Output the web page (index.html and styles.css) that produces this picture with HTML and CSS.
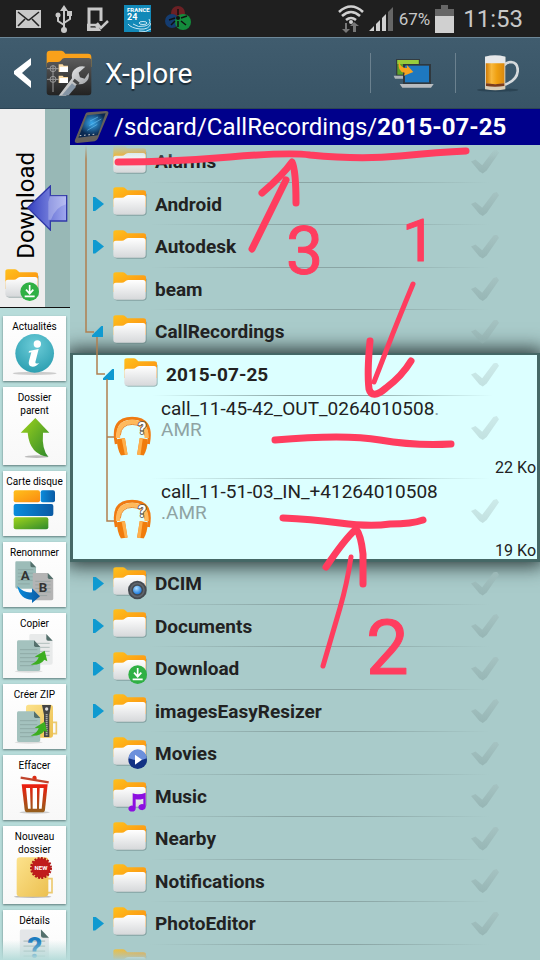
FILE: index.html
```
<!DOCTYPE html>
<html lang="fr">

<head>
    <meta charset="UTF-8">
    <meta name="viewport" content="width=device-width, initial-scale=1.0">
    <title>X-plore</title>
    <link rel="stylesheet" href="styles.css">
</head>

<body>
    <!-- Shared shapes -->
    <svg class="defs" width="0" height="0" aria-hidden="true">
        <defs>
            <linearGradient id="gOrange" x1="0" y1="0" x2="1" y2="1">
                <stop offset="0" stop-color="#ffc01c" />
                <stop offset="1" stop-color="#fb8a10" />
            </linearGradient>
            <linearGradient id="gWhite" x1="0" y1="0" x2="0" y2="1">
                <stop offset="0" stop-color="#fff" />
                <stop offset="1" stop-color="#d6d8da" />
            </linearGradient>
            <linearGradient id="gGreen" x1="0" y1="0" x2="1" y2="1">
                <stop offset="0" stop-color="#a0d41c" />
                <stop offset="1" stop-color="#2f8a2c" />
            </linearGradient>
            <linearGradient id="gBlue" x1="0" y1="0" x2="1" y2="0">
                <stop offset="0" stop-color="#0a8cdc" />
                <stop offset="1" stop-color="#0a5aa4" />
            </linearGradient>
            <linearGradient id="gRed" x1="0" y1="0" x2="0" y2="1">
                <stop offset="0" stop-color="#ee1c10" />
                <stop offset="1" stop-color="#94601c" />
            </linearGradient>
            <linearGradient id="gYellow" x1="0" y1="0" x2="1" y2="1">
                <stop offset="0" stop-color="#fce28c" />
                <stop offset="1" stop-color="#ecc050" />
            </linearGradient>
            <linearGradient id="gMetal" x1="0" y1="0" x2="1" y2="1">
                <stop offset="0" stop-color="#fff" />
                <stop offset="1" stop-color="#8a8e92" />
            </linearGradient>
            <linearGradient id="gBeer" x1="0" y1="0" x2="1" y2="0">
                <stop offset="0" stop-color="#d07c08" />
                <stop offset=".3" stop-color="#f8b83c" />
                <stop offset=".6" stop-color="#f0a010" />
                <stop offset="1" stop-color="#d88810" />
            </linearGradient>
            <linearGradient id="gDark" x1="0" y1="0" x2="0" y2="1">
                <stop offset="0" stop-color="#5c5c5c" />
                <stop offset="1" stop-color="#222" />
            </linearGradient>
            <linearGradient id="gArrow" x1="0" y1="0" x2="1" y2="0">
                <stop offset="0" stop-color="#3440c0" />
                <stop offset="1" stop-color="#a0a8ee" />
            </linearGradient>
            <radialGradient id="gInfo" cx=".5" cy=".3" r=".7">
                <stop offset="0" stop-color="#6cccd8" />
                <stop offset="1" stop-color="#2ea0b2" />
            </radialGradient>
            <radialGradient id="gLens" cx=".4" cy=".3" r=".7">
                <stop offset="0" stop-color="#b0e0ff" />
                <stop offset="1" stop-color="#1878dc" />
            </radialGradient>
            <radialGradient id="gScreen" cx=".5" cy=".4" r=".5">
                <stop offset="0" stop-color="#38a8ec" />
                <stop offset="1" stop-color="#0a2850" />
            </radialGradient>
        </defs>

        <symbol id="folder" viewBox="0 0 108 102">
            <path d="M3 14v62q0 10 10 10h78q10 0 10-10V20z" fill="#64807f" opacity=".55" />
            <path d="M1 60V8q0-7 8-7h21q5 0 9 5l4 4h48q8 0 8 7v43z" fill="url(#gOrange)" />
            <path d="M1 74V40q0-8 8-8h18q5 0 8-3l4-3q3-2 7-2h44q8 0 8 8v42q0 9-9 9H10q-9 0-9-9z" fill="url(#gWhite)" />
        </symbol>
        <symbol id="badge-download" viewBox="0 0 108 102">
            <circle cx="74" cy="68" r="28" fill="#2fb044" />
            <path d="M74 48v24M63 62l11 12 11-12M59 82h30" fill="none" stroke="#fff" stroke-width="5" />
        </symbol>
        <symbol id="badge-camera" viewBox="0 0 108 102">
            <circle cx="73" cy="69" r="28" fill="#444a50" />
            <circle cx="73" cy="69" r="20" fill="none" stroke="#5f656c" stroke-width="5" />
            <circle cx="73" cy="69" r="13" fill="url(#gLens)" />
        </symbol>
        <symbol id="badge-play" viewBox="0 0 108 102">
            <circle cx="74" cy="68" r="28" fill="#123284" />
            <path d="M47 64a27 27 0 0 1 54 0q-24 12-54 0z" fill="#6c90dc" />
            <path d="M66 53v30l21-15z" fill="#fff" />
        </symbol>
        <symbol id="badge-music" viewBox="0 0 108 102">
            <path d="M59 43q18 6 39-2v43a11 9 0 1 1-7-8V59q-12 4-23 2v27a11 9 0 1 1-9-8z" fill="#8c0fe0" />
        </symbol>
        <symbol id="headphones" viewBox="0 0 118 120">
            <path d="M10 84Q-6 6 58 6t49 78" fill="none" stroke="#ef7a12" stroke-width="9" />
            <path d="M15 66Q15 17 58 17t44 49" fill="none" stroke="#ffb95c" stroke-width="13" />
            <path d="M22 58Q25 25 58 25t37 33" fill="none" stroke="#ef8a28" stroke-width="3" />
            <path d="M12 70l24-4 8 50-20 3q-12-20-12-49z" fill="#f07c0c" />
            <path d="M26 68l10-2 8 50-8 1z" fill="#ffb04c" />
            <path d="M105 70l-24-4-8 50 20 3q12-20 12-49z" fill="#f07c0c" />
            <path d="M81 66l9 2-7 50-10-2z" fill="#ffb04c" />
        </symbol>
        <symbol id="page" viewBox="0 0 72 96">
            <path d="M5 2h47l19 20v66q0 6-6 6H6q-5 0-5-6V7q0-5 4-5z" />
            <path d="M52 2l19 20H57q-5 0-5-5z" fill="#54706c" />
            <path d="M10 30h52M10 42h52M10 54h52M10 66h52M10 78h40" stroke="#7c9490" stroke-width="3" opacity=".5" />
        </symbol>
    </svg>

    <div class="status-bar">
        <div class="status-group">
            <svg width="25" height="18" viewBox="0 0 25 18">
                <path d="M0 0h25v18H0z" fill="#c8c8c8" />
                <path d="M2 2l10 8h1l10-8M2 16l7-7M23 16l-7-7" fill="none" stroke="#222" stroke-width="1.6" />
            </svg>
            <svg width="18" height="28" viewBox="0 0 18 28">
                <path d="M9 4v20M9 20l-6-4v-6M9 18l6-4V9" fill="none" stroke="#c8c8c8" stroke-width="2" />
                <path d="M9 0l4 6H5zM12 6h5v5h-5z" fill="#c8c8c8" />
                <circle cx="3" cy="10" r="2.5" fill="#c8c8c8" />
                <circle cx="9" cy="25" r="3" fill="#c8c8c8" />
            </svg>
            <svg width="23" height="24" viewBox="0 0 23 24">
                <path d="M14 14V2H2v20h9" fill="none" stroke="#c8c8c8" stroke-width="3" />
                <path d="M1 18h8l3 5H1zM10 16l4 5 7-7" fill="none" stroke="#c8c8c8" stroke-width="2.5" />
            </svg>
            <svg width="27" height="27" viewBox="0 0 27 27">
                <path d="M0 0h27v27H0z" fill="#1289b8" />
                <text x="3" y="7" class="logo-small">FRANCE</text>
                <text x="3" y="15" class="logo-big">24</text>
                <g fill="none" stroke="#c6e6f2">
                    <ellipse cx="19" cy="18" rx="4" ry="1.5" />
                    <path d="M25 14q3 5-4 7t-12-2M27 18q-2 7-11 6t-12-5M27 24q-5 4-12 2" />
                </g>
            </svg>
            <svg width="26" height="26" viewBox="0 0 26 26">
                <circle cx="13" cy="7" r="7" fill="#6c2024" />
                <circle cx="7" cy="15" r="7" fill="#143c70" />
                <circle cx="18" cy="16" r="8" fill="#148c3c" />
                <circle cx="13" cy="12" r="2" fill="#111" />
                <path d="M13 3v6M4 14l6-2M16 12l6-2M13 15v6M16 15l5 4M10 15l-4 4" stroke="#111" stroke-width="1.5" />
            </svg>
        </div>
        <div class="status-group status-right">
            <svg width="26" height="28" viewBox="0 0 26 28">
                <g fill="none" stroke="#d0d0d0" stroke-width="2.6">
                    <path d="M1 7q12-11 24 0M4 11q9-8 18 0M8 15q5-4 10 0" />
                </g>
                <circle cx="13" cy="17" r="2" fill="#d0d0d0" />
                <path d="M9 18v6h3l-4 4-4-4h3v-6zM15 27v-6h-3l4-4 5 4h-3v6z" fill="#777" />
            </svg>
            <svg width="25" height="24" viewBox="0 0 25 24">
                <path d="M0 24l5-5v5zM7 17l4-4v11H7zM13 11l4-4v17h-4z" fill="#d0d0d0" />
                <path d="M19 5l5-5v24h-5z" fill="#666" />
            </svg>
            <span class="battery-level">67%</span>
            <svg width="19" height="28" viewBox="0 0 19 28">
                <path d="M6 0h7v4h6v8H0V4h6z" fill="#666" />
                <path d="M0 11h19v17H0z" fill="#d0d0d0" />
            </svg>
            <span class="clock">11:53</span>
        </div>
    </div>

    <header class="app-bar">
        <button class="back-button" aria-label="Retour">
            <svg width="17" height="30" viewBox="0 0 17 30">
                <path d="M17 0v7L8 15l9 8v7L0 16v-3z" fill="#fff" />
            </svg>
            <svg width="46" height="46" viewBox="0 0 138 138">
                <path d="M2 12q0-10 10-10h34q7 0 12 9h68q10 0 10 10v30H2z" fill="#f9a11a" />
                <path d="M2 44q0-8 8-8h26q6 0 10-6 3-6 10-6h72q8 0 8 8v94q0 10-10 10H12q-10 0-10-10z" fill="url(#gDark)" />
                <g fill="none" stroke="#9a9a9a" stroke-width="3">
                    <circle cx="21" cy="56" r="9" />
                    <circle cx="21" cy="88" r="9" />
                    <path d="M3 56h35M3 88h35M21 46v52M21 98v28" />
                </g>
                <path d="M38 43h12l3 4h13v19H38zM38 77h12l3 4h13v18H38z" fill="#fbd9a0" />
                <path d="M41 50h25v16H41zM41 84h25v15H41z" fill="#fff" />
                <path d="M38 137l40-52q-4-22 14-32 14-7 26-3L98 68l4 14 14 4 12-18q4 20-12 31-10 6-22 3l-34 35z" fill="url(#gMetal)" />
                <path d="M48 136l30-36 12 10-22 26z" fill="#8494a4" />
                <path d="M86 86l15 12-6 8-15-12z" fill="#444" />
            </svg>
        </button>
        <h1>X-plore</h1>
        <button class="bar-button" aria-label="Transfert">
            <svg width="41" height="30" viewBox="0 0 123 90">
                <path d="M9 3h72v50H9z" fill="#333c40" />
                <path d="M13 6h64v44H13z" fill="#5ea028" />
                <path d="M13 6h64v12H13z" fill="#98cc3c" />
                <path d="M2 53h30v9H6z" fill="#aeb4b8" />
                <path d="M30 18h84v60H30z" fill="#30383e" />
                <path d="M36 23h72v50H36z" fill="#1e78c0" />
                <path d="M20 78h102l-8 11H28z" fill="#b8bcc0" />
                <path d="M18 10q4 22 24 20l-1-10 20 22-28 11 2-9Q12 42 18 10z" fill="#f8a420" />
            </svg>
        </button>
        <button class="bar-button" aria-label="Bière">
            <svg width="42" height="38" viewBox="0 0 126 114">
                <ellipse cx="62" cy="108" rx="62" ry="5" fill="#1c3240" opacity=".5" />
                <path d="M82 34q6-10 20-10 22 2 20 28t-38 40" fill="none" stroke="#d6dadd" stroke-width="8" />
                <path d="M24 8h61v98q-30 6-61 0z" fill="#d8cdb8" />
                <path d="M27 26h55v62q-28 6-55 0z" fill="url(#gBeer)" />
                <path d="M27 88q28 5 55 0v8q-28 5-55 0z" fill="#7c3c1c" />
                <path d="M24 8q30-8 61 0v20H24z" fill="#e6e8ea" />
            </svg>
        </button>
    </header>

    <div class="content">
        <nav class="sidebar">
            <a class="pane-tab" href="#download">
                <span>Download</span>
                <svg width="36" height="34"><use href="#folder" /><use href="#badge-download" /></svg>
                <svg class="pane-arrow" width="41" height="46" viewBox="0 0 123 138">
                    <path d="M2 68L70 3v29h49v76H70v27z" fill="url(#gArrow)" stroke="#3038a8" stroke-width="4" />
                    <path d="M70 32h47v26Q86 66 72 104H64V50z" fill="#fff" opacity=".25" />
                </svg>
            </a>
            <div class="actions">
                <button class="action">
                    <span>Actualités</span>
                    <svg class="action-icon" viewBox="0 0 150 132">
                        <ellipse cx="74" cy="121" rx="66" ry="5" fill="#ccc" />
                        <circle cx="74" cy="61" r="58" fill="url(#gInfo)" />
                        <circle cx="82" cy="33" r="11" fill="#fff" />
                        <path d="M57 54l29-6-10 40q0 6 12 2-12 14-26 10-8-4-5-16l7-26-8 1z" fill="#fff" />
                    </svg>
                </button>
                <button class="action">
                    <span>Dossier parent</span>
                    <svg class="action-icon" viewBox="0 0 150 132">
                        <ellipse cx="80" cy="119" rx="36" ry="4" fill="#bbb" />
                        <path d="M76 3l42 44H99q-4 50 16 72-56-6-62-72H32z" fill="url(#gGreen)" />
                    </svg>
                </button>
                <button class="action">
                    <span>Carte disque</span>
                    <svg class="action-icon" viewBox="0 0 150 132">
                        <rect x="11" y="7" width="79" height="36" rx="6" fill="url(#gOrange)" />
                        <rect x="92" y="7" width="43" height="36" rx="6" fill="url(#gBlue)" />
                        <rect x="11" y="48" width="119" height="36" rx="6" fill="url(#gBlue)" />
                        <rect x="11" y="88" width="104" height="36" rx="6" fill="url(#gGreen)" />
                    </svg>
                </button>
                <button class="action">
                    <span>Renommer</span>
                    <svg class="action-icon" viewBox="0 0 150 132">
                        <use href="#page" x="15" y="5" width="64" height="86" fill="#9cbcb8" />
                        <use href="#page" x="67" y="40" width="64" height="86" fill="#b4b4b4" />
                        <text x="46" y="64" class="letter">A</text>
                        <text x="99" y="98" class="letter">B</text>
                        <path d="M22 81q20 22 44 19V88l24 24-24 20v-10q-36 0-44-41z" fill="url(#gBlue)" />
                    </svg>
                </button>
                <button class="action">
                    <span>Copier</span>
                    <svg class="action-icon" viewBox="0 0 150 132">
                        <ellipse cx="56" cy="124" rx="42" ry="4" fill="#ddd" />
                        <use href="#page" x="57" y="10" width="72" height="96" fill="#e8eaea" />
                        <use href="#page" x="20" y="29" width="72" height="96" fill="#a4c2be" />
                        <path d="M62 104q20-8 24-22l-12-2 30-18 8 32-9-5q-12 18-41 15z" fill="#3cae20" />
                    </svg>
                </button>
                <button class="action">
                    <span>Créer ZIP</span>
                    <svg class="action-icon" viewBox="0 0 150 132">
                        <ellipse cx="56" cy="124" rx="42" ry="4" fill="#ddd" />
                        <path d="M124 64h15v34h-15" fill="none" stroke="#ecca70" stroke-width="5" />
                        <rect x="48" y="11" width="81" height="99" rx="8" fill="url(#gYellow)" />
                        <path d="M96 12h27l-5 30v66h-16V42z" fill="#444" />
                        <path d="M110 40v66" stroke="#ccc" stroke-width="6" stroke-dasharray="3 3" />
                        <circle cx="110" cy="24" r="5" fill="#ddd" />
                        <use href="#page" x="20" y="29" width="72" height="96" fill="#a4c2be" />
                        <path d="M62 104q20-8 24-22l-12-2 30-18 8 32-9-5q-12 18-41 15z" fill="#3cae20" />
                    </svg>
                </button>
                <button class="action">
                    <span>Effacer</span>
                    <svg class="action-icon" viewBox="0 0 150 132">
                        <ellipse cx="74" cy="121" rx="46" ry="4" fill="#ccc" />
                        <path d="M32 17l84 14" stroke="#c0442c" stroke-width="7" />
                        <path d="M67 20q0-10 7-9t6 11z" fill="#dc2c14" />
                        <path d="M35 37h78l-8 76q-1 8-9 8H53q-8 0-9-8z" fill="url(#gRed)" />
                        <path d="M48 48h12l2 62h-8zM68 48h13v62H68zM89 48h12l-6 62h-8z" fill="#fff" />
                    </svg>
                </button>
                <button class="action">
                    <span>Nouveau dossier</span>
                    <svg class="action-icon" viewBox="0 0 150 132">
                        <ellipse cx="68" cy="122" rx="56" ry="4" fill="#bbb" />
                        <path d="M112 68h14v42h-14" fill="none" stroke="#ecca70" stroke-width="5" />
                        <rect x="20" y="4" width="95" height="118" rx="10" fill="url(#gYellow)" />
                        <circle cx="93" cy="36" r="29" fill="#c01c1c" />
                        <circle cx="93" cy="36" r="30" fill="none" stroke="#b01818" stroke-width="6" stroke-dasharray="6 4" />
                        <text x="93" y="42" class="new-text">NEW</text>
                    </svg>
                </button>
                <button class="action">
                    <span>Détails</span>
                    <svg class="action-icon" viewBox="0 0 150 132">
                        <use href="#page" x="28" y="5" width="90" height="120" fill="#e4e6e8" />
                        <text x="74" y="92" class="question">?</text>
                    </svg>
                </button>
            </div>
        </nav>

        <main class="browser">
            <div class="path-bar">
                <svg width="35" height="32" viewBox="0 0 105 96">
                    <path d="M34 10q2-6 8-6l54-4q9 0 7 8L72 82q-3 8-10 9l-52 5q-10 0-7-9z" fill="#64605c" />
                    <path d="M39 13l56-6-24 66-58 7z" fill="url(#gScreen)" />
                    <path d="M48 30l24-12M46 44l36-20M40 58l30-18" stroke="#6cc4f4" stroke-width="3" opacity=".6" />
                    <path d="M17 74l52-5" stroke="#ccc" stroke-width="3" stroke-dasharray="5 8" />
                </svg>
                <p>/sdcard/CallRecordings/<b>2015-07-25</b></p>
            </div>

            <div class="tree">
                <ul>
                    <li class="row">
                        <span class="twisty"></span>
                        <svg class="icon"><use href="#folder" /></svg>
                        <span class="name">Alarms</span>
                        <input type="checkbox" class="tick" aria-label="Alarms">
                    </li>
                    <li class="row">
                        <span class="twisty closed"></span>
                        <svg class="icon"><use href="#folder" /></svg>
                        <span class="name">Android</span>
                        <input type="checkbox" class="tick" aria-label="Android">
                    </li>
                    <li class="row">
                        <span class="twisty closed"></span>
                        <svg class="icon"><use href="#folder" /></svg>
                        <span class="name">Autodesk</span>
                        <input type="checkbox" class="tick" aria-label="Autodesk">
                    </li>
                    <li class="row">
                        <span class="twisty"></span>
                        <svg class="icon"><use href="#folder" /></svg>
                        <span class="name">beam</span>
                        <input type="checkbox" class="tick" aria-label="beam">
                    </li>
                    <li class="row last">
                        <span class="twisty open"></span>
                        <svg class="icon"><use href="#folder" /></svg>
                        <span class="name">CallRecordings</span>
                        <input type="checkbox" class="tick" aria-label="CallRecordings">
                    </li>
                </ul>

                <section class="current">
                    <div class="row nested">
                        <span class="twisty open"></span>
                        <svg class="icon"><use href="#folder" /></svg>
                        <span class="name">2015-07-25</span>
                        <input type="checkbox" class="tick" aria-label="2015-07-25">
                    </div>
                    <div class="file">
                        <svg class="file-icon" viewBox="0 0 118 120">
                            <use href="#headphones" />
                            <text x="76" y="54" class="mark">?</text>
                        </svg>
                        <p class="file-name">call_11-45-42_OUT_0264010508<span>.<br>AMR</span></p>
                        <input type="checkbox" class="tick" aria-label="call_11-45-42_OUT_0264010508.AMR">
                        <span class="size">22 Ko</span>
                    </div>
                    <div class="file">
                        <svg class="file-icon" viewBox="0 0 118 120">
                            <use href="#headphones" />
                            <text x="76" y="54" class="mark">?</text>
                        </svg>
                        <p class="file-name">call_11-51-03_IN_+41264010508<span><br>.AMR</span></p>
                        <input type="checkbox" class="tick" aria-label="call_11-51-03_IN_+41264010508.AMR">
                        <span class="size">19 Ko</span>
                    </div>
                </section>

                <ul>
                    <li class="row">
                        <span class="twisty closed"></span>
                        <svg class="icon"><use href="#folder" /><use href="#badge-camera" /></svg>
                        <span class="name">DCIM</span>
                        <input type="checkbox" class="tick" aria-label="DCIM">
                    </li>
                    <li class="row">
                        <span class="twisty closed"></span>
                        <svg class="icon"><use href="#folder" /></svg>
                        <span class="name">Documents</span>
                        <input type="checkbox" class="tick" aria-label="Documents">
                    </li>
                    <li class="row">
                        <span class="twisty closed"></span>
                        <svg class="icon"><use href="#folder" /><use href="#badge-download" /></svg>
                        <span class="name">Download</span>
                        <input type="checkbox" class="tick" aria-label="Download">
                    </li>
                    <li class="row">
                        <span class="twisty closed"></span>
                        <svg class="icon"><use href="#folder" /></svg>
                        <span class="name">imagesEasyResizer</span>
                        <input type="checkbox" class="tick" aria-label="imagesEasyResizer">
                    </li>
                    <li class="row">
                        <span class="twisty"></span>
                        <svg class="icon"><use href="#folder" /><use href="#badge-play" /></svg>
                        <span class="name">Movies</span>
                        <input type="checkbox" class="tick" aria-label="Movies">
                    </li>
                    <li class="row">
                        <span class="twisty"></span>
                        <svg class="icon"><use href="#folder" /><use href="#badge-music" /></svg>
                        <span class="name">Music</span>
                        <input type="checkbox" class="tick" aria-label="Music">
                    </li>
                    <li class="row">
                        <span class="twisty"></span>
                        <svg class="icon"><use href="#folder" /></svg>
                        <span class="name">Nearby</span>
                        <input type="checkbox" class="tick" aria-label="Nearby">
                    </li>
                    <li class="row">
                        <span class="twisty"></span>
                        <svg class="icon"><use href="#folder" /></svg>
                        <span class="name">Notifications</span>
                        <input type="checkbox" class="tick" aria-label="Notifications">
                    </li>
                    <li class="row">
                        <span class="twisty closed"></span>
                        <svg class="icon"><use href="#folder" /></svg>
                        <span class="name">PhotoEditor</span>
                        <input type="checkbox" class="tick" aria-label="PhotoEditor">
                    </li>
                    <li class="row">
                        <span class="twisty"></span>
                        <svg class="icon"><use href="#folder" /></svg>
                    </li>
                </ul>

                <!-- Branches joining the open folders -->
                <svg class="branches" width="60" height="400" aria-hidden="true">
                    <path d="M16 0v187h8M27 192v37h8M37 234v142h7M37 292h7" />
                </svg>
            </div>
        </main>
    </div>

    <!-- Pen notes over the screen -->
    <svg class="notes" width="540" height="960">
        <g class="ink">
            <path d="M118 162Q170 162 230 157T310 155Q360 160 400 156T466 151" />
            <path d="M252 249L286 180M262 193Q282 176 292 162 296 170 296 203" />
            <path class="thin" d="M413 284Q398 320 388 346T374 382" />
            <path d="M370 341Q367 372 369 389 372 400 386 388 402 376 411 361" />
            <path d="M275 440Q345 434 380 440T451 444" />
            <path d="M283 518Q310 519 340 523T390 524Q412 524 423 520" />
            <path class="thin" d="M351 557Q347 584 340 608T323 666" />
            <path d="M326 567Q344 540 356 529 361 535 363 554V584" />
        </g>
        <text x="402" y="261" font-size="60">1</text>
        <text x="366" y="674" font-size="76">2</text>
        <text x="286" y="274" font-size="66">3</text>
    </svg>
</body>

</html>
```
FILE: styles.css
```
* {
    box-sizing: border-box;
}

body {
    font-family: Roboto, "Liberation Sans", sans-serif;
    margin: 0;
    height: 100vh;
    display: flex;
    flex-direction: column;
    overflow: hidden;
    position: relative;
    background: #a9cbca;
    color: #222;
}

h1,
p,
ul {
    margin: 0;
    padding: 0;
    font-weight: normal;
}

ul {
    list-style: none;
}

button {
    font-family: inherit;
    border: none;
    padding: 0;
    background: none;
    color: inherit;
}

svg {
    display: block;
    flex-shrink: 0;
}

.defs {
    position: absolute;
}

/* Status bar */
.status-bar {
    height: 37px;
    padding: 0 17px 0 16px;
    display: flex;
    justify-content: space-between;
    align-items: center;
    background: #1f1f1f;
    color: #c8c8c8;
}

.status-group {
    display: flex;
    align-items: center;
    gap: 14px;
}

.status-right {
    gap: 5px;
}

.battery-level {
    font-size: 17px;
}

.clock {
    font-size: 24px;
    margin-left: 4px;
}

.logo-small {
    font: bold 6px Roboto, sans-serif;
    fill: #fff;
}

.logo-big {
    font: bold 9px Roboto, sans-serif;
    fill: #fff;
}

/* App bar */
.app-bar {
    height: 72px;
    display: flex;
    align-items: center;
    border-top: 1px solid #6d8798;
    border-bottom: 1px solid #2c4454;
    background: linear-gradient(#405c6e, #385466);
    color: #fff;
}

.back-button {
    display: flex;
    align-items: center;
    gap: 15px;
    padding-left: 14px;
}

.app-bar h1 {
    flex: 1;
    padding-left: 13px;
    font-size: 28px;
    text-shadow: 0 2px 1px #1c2c38;
}

.bar-button {
    width: 85px;
    height: 40px;
    border-left: 1px solid #6b818f;
    display: flex;
    justify-content: center;
    align-items: center;
}

/* Main area */
.content {
    flex: 1;
    min-height: 0;
    display: flex;
}

.sidebar {
    width: 70px;
    flex-shrink: 0;
    position: relative;
    overflow: hidden;
    background: #b7dcda;
}

.sidebar::after {
    content: "";
    position: absolute;
    left: 0;
    right: 0;
    bottom: 0;
    height: 20px;
    background: linear-gradient(rgba(183, 220, 218, 0), #b7dcda);
}

.pane-tab {
    position: relative;
    height: 199px;
    padding: 0 29px 4px 6px;
    display: flex;
    flex-direction: column;
    justify-content: flex-end;
    align-items: flex-end;
    gap: 10px;
    border-bottom: 1px solid #111;
    background: linear-gradient(90deg, #eee 45px, #98b8b6 45px);
    color: #000;
    text-decoration: none;
}

.pane-tab span {
    font-size: 24px;
    line-height: 30px;
    writing-mode: vertical-rl;
    transform: rotate(180deg);
}

.pane-arrow {
    position: absolute;
    left: 27px;
    top: 76px;
}

.actions {
    display: flex;
    flex-direction: column;
    gap: 6px;
    padding: 8px 4px 0 3px;
}

.action {
    flex-shrink: 0;
    display: flex;
    flex-direction: column;
    align-items: center;
    padding: 4px 0;
    background: linear-gradient(#fff, #f8f8f8);
    box-shadow: 0 1px 2px #5f7c7b;
    color: #000;
    font-size: 10px;
    line-height: 13px;
}

.action span {
    padding: 0 2px;
}

.action-icon {
    width: 50px;
    height: 44px;
}

.letter {
    font: bold 40px Roboto, sans-serif;
    text-anchor: middle;
    fill: #333;
}

.new-text {
    font: bold 18px Roboto, sans-serif;
    text-anchor: middle;
    fill: #fff;
}

.question {
    font: bold 90px Roboto, sans-serif;
    text-anchor: middle;
    fill: #1c7cc0;
}

.mark {
    font: bold 50px Roboto, sans-serif;
    fill: #fff;
    stroke: #555;
    stroke-width: 5;
    paint-order: stroke;
}

/* File browser */
.browser {
    flex: 1;
    min-width: 0;
    display: flex;
    flex-direction: column;
}

.path-bar {
    height: 36px;
    flex-shrink: 0;
    display: flex;
    align-items: center;
    gap: 5px;
    padding-left: 4px;
    background: #00008b;
    color: #fff;
    font-size: 24px;
    white-space: nowrap;
}

.tree {
    flex: 1;
    min-height: 0;
    position: relative;
    overflow: hidden;
}

.tree ul:first-child {
    margin-top: -5px;
}

.tree::before,
.tree::after {
    content: "";
    position: absolute;
    left: 0;
    right: 0;
    height: 14px;
    z-index: 1;
}

.tree::before {
    top: 0;
    background: linear-gradient(#a9cbca, rgba(169, 203, 202, 0));
}

.tree::after {
    bottom: 0;
    background: linear-gradient(rgba(169, 203, 202, 0), #a9cbca);
}

.row {
    height: 42px;
    display: flex;
    align-items: center;
    padding: 0 41px 0 22px;
    background: linear-gradient(90deg, transparent, #8aa5a4 40%, #8aa5a4 60%, transparent) 80px 100% / 340px 1px no-repeat;
}

.row:nth-child(odd) {
    height: 43px;
}

.row.last {
    background: none;
}

.row.nested {
    height: 41px;
    padding: 0 38px 2px 30px;
}

.twisty {
    width: 21px;
}

.twisty::before {
    content: "";
    display: block;
    width: 11px;
    height: 14px;
}

.twisty.closed::before {
    margin-left: 1px;
    background: #0f9ad0;
    clip-path: polygon(0 0, 20% 0, 100% 50%, 20% 100%, 0 100%);
}

.twisty.open::before {
    height: 11px;
    background: #0f9ad0;
    clip-path: polygon(85% 0, 100% 0, 100% 100%, 0 100%, 0 85%);
}

.icon {
    width: 36px;
    height: 34px;
}

.name {
    flex: 1;
    padding-left: 6px;
    font-size: 19px;
    font-weight: bold;
}

.tick {
    appearance: none;
    width: 28px;
    height: 24px;
    margin: 0;
    background: linear-gradient(#a3bfbe, #8fadac);
    clip-path: polygon(0 50%, 16% 42%, 40% 66%, 80% 4%, 92% 0, 100% 14%, 56% 88%, 42% 100%, 30% 92%);
    opacity: .7;
}

.current {
    border: solid #456866;
    border-width: 2px 3px 3px;
    background: #dcffff;
    box-shadow: 0 0 18px 4px rgba(20, 30, 30, .85);
}

.current .tick {
    background: linear-gradient(#c6e2e1, #b6d4d3);
}

.file {
    display: grid;
    grid-template-columns: 39px 1fr 28px 38px;
    grid-template-rows: 64px 16px;
    align-items: center;
    padding: 0 0 3px 40px;
    background: linear-gradient(90deg, transparent, #a8c6c6 40%, #a8c6c6 60%, transparent) 78px 100% / 340px 1px no-repeat;
}

.file:last-child {
    padding-bottom: 0;
    background: none;
}

.file-icon {
    grid-row: 1 / 3;
    width: 39px;
    height: 40px;
}

.file-name {
    align-self: start;
    padding: 2px 0 0 9px;
    font-size: 19px;
    line-height: 21px;
    white-space: nowrap;
}

.file-name span {
    color: #8fa3a3;
}

.size {
    grid-column: 2 / 5;
    padding-right: 1px;
    font-size: 16px;
    line-height: 16px;
    text-align: right;
}

.branches {
    position: absolute;
    left: 0;
    top: 0;
    fill: none;
    stroke: #b08050;
    stroke-width: 1.5;
}

/* Pen notes */
.notes {
    position: absolute;
    left: 0;
    top: 0;
    z-index: 2;
    pointer-events: none;
    fill: #ff3d5f;
    stroke: #ff3d5f;
    stroke-width: 1;
    stroke-linecap: round;
    stroke-linejoin: round;
}

.ink {
    fill: none;
    stroke-width: 7;
}

.ink .thin {
    stroke-width: 5;
}
```
